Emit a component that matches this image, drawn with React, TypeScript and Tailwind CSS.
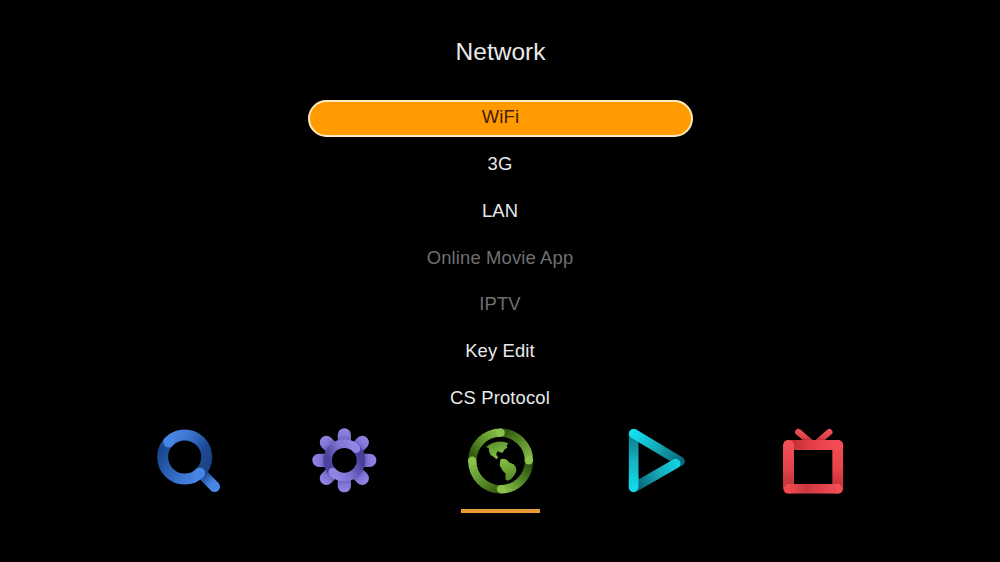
import type { ReactNode } from "react";

type Stop = [number, string];

function Gradient({ id, from, to, stops }: { id: string; from: [number, number]; to: [number, number]; stops: Stop[] }) {
  return (
    <linearGradient id={id} gradientUnits="userSpaceOnUse" x1={from[0]} y1={from[1]} x2={to[0]} y2={to[1]}>
      {stops.map(([offset, color]) => (
        <stop key={offset} offset={offset} stopColor={color} />
      ))}
    </linearGradient>
  );
}

function Icon({ x, label, children }: { x: number; label: string; children: ReactNode }) {
  return (
    <svg className="h-20 w-[85px]" viewBox={`${x} 0 255 240`} fill="none" strokeLinecap="round" role="img" aria-label={label}>
      {children}
    </svg>
  );
}

function SearchIcon() {
  return (
    <Icon x={0} label="Search">
      <Gradient id="search-top" from={[65, 60]} to={[180, 140]} stops={[[0, "#4a86e4"], [0.35, "#3c74d0"], [0.75, "#1d4a97"], [1, "#1b4488"]]} />
      <Gradient id="search-bottom" from={[165, 165]} to={[52, 90]} stops={[[0, "#4a86e6"], [0.45, "#356bc6"], [1, "#1c4892"]]} />
      <Gradient id="search-handle" from={[176, 166]} to={[205, 196]} stops={[[0, "#1f4c98"], [0.7, "#427dda"], [1, "#4987e6"]]} />
      <path d="M172 162 209 200" stroke="url(#search-handle)" strokeWidth="32" />
      <path d="M165.7 157.7A66 66 0 0 1 72.3 64.3" stroke="url(#search-bottom)" strokeWidth="33" strokeLinecap="butt" />
      <path d="M72.3 64.3A66 66 0 0 1 165.7 157.7" stroke="url(#search-top)" strokeWidth="33" strokeLinecap="butt" />
      <circle cx="71" cy="66" r="16.5" fill="#4784e3" />
      <circle cx="164" cy="159" r="16.5" fill="#4784e3" />
    </Icon>
  );
}

function GearIcon() {
  return (
    <Icon x={-3} label="Settings">
      <Gradient id="gear-tooth" from={[127, 24]} to={[127, 76]} stops={[[0, "#9387e6"], [0.45, "#8377d7"], [1, "#51479f"]]} />
      <Gradient id="gear-top" from={[165, 88]} to={[82, 122]} stops={[[0, "#9488e8"], [0.55, "#7d72d0"], [1, "#4b419e"]]} />
      <Gradient id="gear-bottom" from={[88, 155]} to={[172, 115]} stops={[[0, "#9488e8"], [0.5, "#7b6fcf"], [1, "#493f9b"]]} />
      {[0, 45, 90, 135, 180, 225, 270, 315].map((angle) => (
        <path key={angle} transform={`rotate(${angle} 127 121)`} d="M127 45V62" stroke="url(#gear-tooth)" strokeWidth="40" />
      ))}
      <path d="M162.4 85.6A50 50 0 0 0 91.6 156.4" stroke="url(#gear-top)" strokeWidth="26" strokeLinecap="butt" />
      <path d="M91.6 156.4A50 50 0 0 0 162.4 85.6" stroke="url(#gear-bottom)" strokeWidth="26" strokeLinecap="butt" />
      <circle cx="162" cy="86" r="13" fill="#9084e5" />
      <circle cx="92" cy="156" r="13" fill="#9084e5" />
    </Icon>
  );
}

function GlobeIcon() {
  return (
    <Icon x={6} label="Network">
      <Gradient id="globe-nw" from={[140, 38]} to={[52, 110]} stops={[[0, "#8ac24a"], [0.45, "#659b30"], [1, "#31580f"]]} />
      <Gradient id="globe-ne" from={[222, 130]} to={[145, 38]} stops={[[0, "#8bc34a"], [0.5, "#5b902c"], [1, "#30570f"]]} />
      <Gradient id="globe-se" from={[140, 208]} to={[220, 130]} stops={[[0, "#8ac24a"], [0.5, "#558a28"], [1, "#2e530f"]]} />
      <Gradient id="globe-sw" from={[50, 120]} to={[140, 208]} stops={[[0, "#8ac24a"], [0.5, "#5c922c"], [1, "#315910"]]} />
      <Gradient id="america-north" from={[110, 65]} to={[130, 115]} stops={[[0, "#568e2d"], [1, "#8bc34a"]]} />
      <Gradient id="america-south" from={[148, 118]} to={[163, 182]} stops={[[0, "#83bb43"], [1, "#558b28"]]} />
      <g strokeWidth="25" strokeLinecap="butt">
        <path d="M137 38A85 85 0 0 0 52 123" stroke="url(#globe-nw)" />
        <path d="M137 38A85 85 0 0 1 222 123" stroke="url(#globe-ne)" />
        <path d="M222 123A85 85 0 0 1 137 208" stroke="url(#globe-se)" />
        <path d="M137 208A85 85 0 0 1 52 123" stroke="url(#globe-sw)" />
      </g>
      <g fill="#8bc34a">
        <circle cx="137" cy="38" r="12.5" />
        <circle cx="221.5" cy="121" r="12.5" />
        <circle cx="138" cy="207.5" r="12.5" />
        <circle cx="51.5" cy="122" r="12.5" />
      </g>
      <path d="M93 81Q107 68 128 65 146 63 160 70L155 77 157 83 149 88 143 98 134 97 129 93 124 100 125 107 130 111 124 118 118 112 107 105 102 94 101 84Z" fill="url(#america-north)" />
      <path d="M136 119Q144 113 155 119L164 128 176 133Q185 141 184 154L177 167 168 178 158 182 151 178 152 161 142 151 134 136Z" fill="url(#america-south)" />
    </Icon>
  );
}

function PlayIcon() {
  return (
    <Icon x={-6} label="Media">
      <Gradient id="play-left" from={[56, 205]} to={[56, 50]} stops={[[0, "#12d9ea"], [0.5, "#16b6c5"], [1, "#0c7e8d"]]} />
      <Gradient id="play-top" from={[55, 40]} to={[196, 124]} stops={[[0, "#13deee"], [0.4, "#16b5c3"], [1, "#09697b"]]} />
      <Gradient id="play-bottom" from={[188, 126]} to={[68, 202]} stops={[[0, "#12d3e3"], [0.45, "#17abb9"], [1, "#086375"]]} />
      <g strokeWidth="29">
        <path d="M56 42V202" stroke="url(#play-left)" />
        <path d="M56 41 195 124" stroke="url(#play-top)" />
        <path d="M182 131 62 200" stroke="url(#play-bottom)" />
        <path d="M56 201V176" stroke="url(#play-left)" />
      </g>
    </Icon>
  );
}

function TvIcon() {
  return (
    <Icon x={-3} label="TV">
      <Gradient id="tv-antenna" from={[130, 38]} to={[130, 68]} stops={[[0, "#ef4b52"], [0.45, "#df4047"], [1, "#9f2329"]]} />
      <Gradient id="tv-top" from={[62, 75]} to={[205, 75]} stops={[[0, "#be2d34"], [0.4, "#e33d45"], [1, "#f34c54"]]} />
      <Gradient id="tv-left" from={[56, 75]} to={[56, 205]} stops={[[0, "#f34d55"], [0.55, "#e4434a"], [1, "#bd3036"]]} />
      <Gradient id="tv-right" from={[203, 75]} to={[203, 205]} stops={[[0, "#f34c55"], [0.5, "#e8444c"], [1, "#c63037"]]} />
      <Gradient id="tv-bottom" from={[56, 205]} to={[203, 205]} stops={[[0, "#f04a51"], [0.35, "#cb383e"], [1, "#f34d56"]]} />
      <clipPath id="tv-frame">
        <rect x="39" y="60" width="181" height="161" rx="14" />
      </clipPath>
      <g stroke="url(#tv-antenna)" strokeWidth="19">
        <path d="M85 36 122 68" />
        <path d="M178 36 142 68" />
      </g>
      <g clipPath="url(#tv-frame)" strokeWidth="33">
        <path d="M55 75H203" stroke="url(#tv-top)" strokeWidth="30" />
        <path d="M203.5 76V205" stroke="url(#tv-right)" />
        <path d="M55.5 76V205" stroke="url(#tv-left)" />
        <path d="M56 206.5H203" stroke="url(#tv-bottom)" strokeWidth="29" />
      </g>
    </Icon>
  );
}

const menuItems = [
  { label: "3G", enabled: true },
  { label: "LAN", enabled: true },
  { label: "Online Movie App", enabled: false },
  { label: "IPTV", enabled: false },
  { label: "Key Edit", enabled: true },
  { label: "CS Protocol", enabled: true },
];

export default function App() {
  return (
    <main className="flex h-[562px] w-[1000px] flex-col items-center overflow-hidden bg-black font-['Liberation_Sans',Arial,sans-serif] text-[#e9e9e9]">
      <h1 className="mt-8 h-10 pl-px text-[24.5px] leading-10 font-normal">Network</h1>
      <ul className="mt-7 flex w-[385px] flex-col text-center text-[18.4px] tracking-[0.15px]">
        <li className="mb-1 h-[37px] rounded-full border-2 border-[#ffe8bd] bg-[#ff9b00] pl-px leading-[30px] text-[#3d2009]">WiFi</li>
        {menuItems.map((item) => (
          <li key={item.label} className={`h-[46.8px] leading-[46px] ${item.enabled ? "" : "text-[#707070]"}`}>
            {item.label}
          </li>
        ))}
      </ul>
      <nav className="-mt-[1.8px] flex w-[710px] gap-[71px]">
        <SearchIcon />
        <GearIcon />
        <div className="flex flex-col items-center">
          <GlobeIcon />
          <div className="mt-[9px] ml-0.5 h-1 w-[79px] bg-[#e99a35]" />
        </div>
        <PlayIcon />
        <TvIcon />
      </nav>
    </main>
  );
}
